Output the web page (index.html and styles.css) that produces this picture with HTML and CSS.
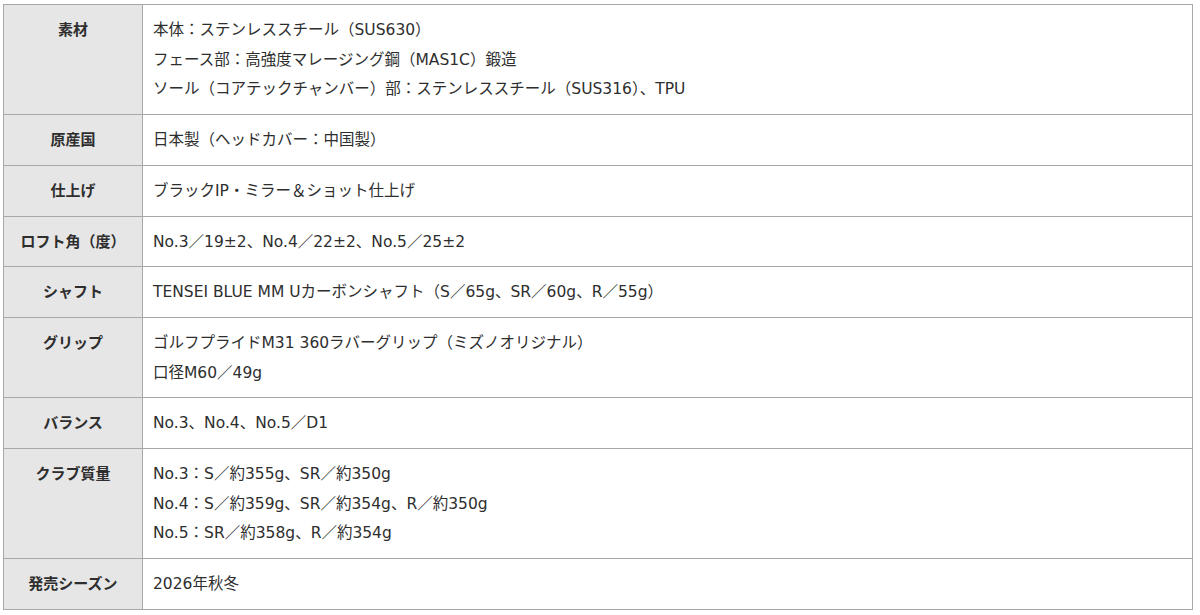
FILE: index.html
```html
<!DOCTYPE html>
<html lang="ja">
<head>
<meta charset="utf-8">
<link rel="stylesheet" href="styles.css">
</head>
<body>
<table class="spec">
  <tbody>
    <tr><th>素材</th><td>本体：ステンレススチール（SUS630）<br>フェース部：高強度マレージング鋼（MAS1C）鍛造<br>ソール（コアテックチャンバー）部：ステンレススチール（SUS316）、TPU</td></tr>
    <tr><th>原産国</th><td>日本製（ヘッドカバー：中国製）</td></tr>
    <tr><th>仕上げ</th><td>ブラックIP・ミラー＆ショット仕上げ</td></tr>
    <tr><th>ロフト角（度）</th><td>No.3／19±2、No.4／22±2、No.5／25±2</td></tr>
    <tr><th>シャフト</th><td>TENSEI BLUE MM Uカーボンシャフト（S／65g、SR／60g、R／55g）</td></tr>
    <tr><th>グリップ</th><td>ゴルフプライドM31 360ラバーグリップ（ミズノオリジナル）<br>口径M60／49g</td></tr>
    <tr><th>バランス</th><td>No.3、No.4、No.5／D1</td></tr>
    <tr><th>クラブ質量</th><td>No.3：S／約355g、SR／約350g<br>No.4：S／約359g、SR／約354g、R／約350g<br>No.5：SR／約358g、R／約354g</td></tr>
    <tr><th>発売シーズン</th><td>2026年秋冬</td></tr>
  </tbody>
</table>
</body>
</html>
```
FILE: styles.css
```css
html, body {
  margin: 0;
  padding: 0;
  background: #ffffff;
}
body {
  padding: 4px 7px 0 3px;
  font-family: "DejaVu Sans", "Noto Sans CJK JP", sans-serif;
  font-size: 15.5px;
  color: #2e2e2e;
}
.spec {
  width: 1190px;
  border-collapse: collapse;
  line-height: 29.7px;
}
.spec th,
.spec td {
  border: 1px solid #a8a8a8;
  vertical-align: top;
}
.spec th {
  width: 118px;
  padding: 9px 10px 11px;
  background: #e6e6e6;
  font-family: "Noto Sans CJK JP", sans-serif;
  font-weight: bold;
  font-size: 15px;
  text-align: center;
  color: #2e2e2e;
  white-space: nowrap;
}
.spec td {
  padding: 11px 10px 9px;
  text-align: left;
}
```
